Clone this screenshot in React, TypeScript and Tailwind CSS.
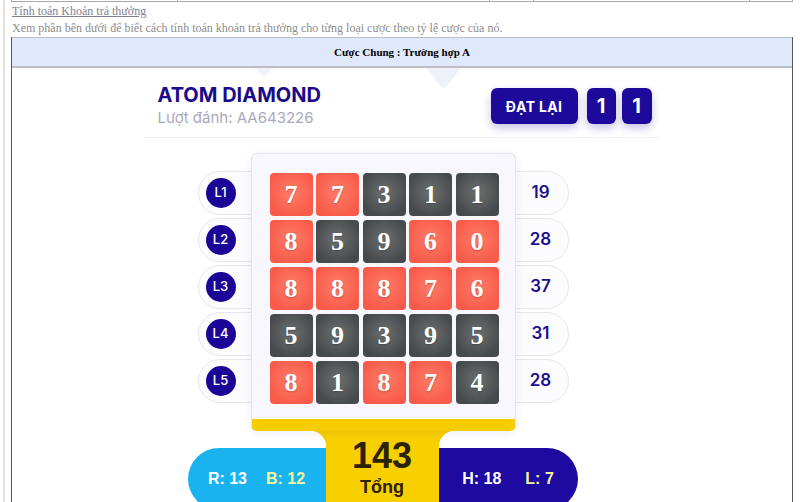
const digits = [
  [7, 7, 3, 1, 1],
  [8, 5, 9, 6, 0],
  [8, 8, 8, 7, 6],
  [5, 9, 3, 9, 5],
  [8, 1, 8, 7, 4],
];

// 1 = red cell, 0 = dark cell
const reds = [
  [1, 1, 0, 0, 0],
  [1, 0, 0, 1, 1],
  [1, 1, 1, 1, 1],
  [0, 0, 0, 0, 0],
  [1, 0, 1, 1, 0],
];

const lineTotals = digits.map((row) => row.reduce((a, b) => a + b, 0));
const total = lineTotals.reduce((a, b) => a + b, 0);

function Cell({ value, red }: { value: number; red: boolean }) {
  return (
    <div
      className={`flex h-[43px] w-[43px] items-center justify-center rounded-[4px] text-[26px] font-bold text-white [font-family:'Liberation_Serif',serif] [text-shadow:0_1px_2px_rgba(0,0,0,0.25)] ${
        red
          ? 'bg-[radial-gradient(circle_at_50%_45%,#ff7c69_0%,#f85b4a_75%)]'
          : 'bg-[radial-gradient(circle_at_50%_45%,#6c706e_0%,#464a4d_75%)]'
      }`}
    >
      {value}
    </div>
  );
}

function GameBoard() {
  return (
    <div className="relative mx-auto w-[517px] [font-family:Inter,'Liberation_Sans',sans-serif]">
      {/* pale decorative shapes peeking from the top */}
      <svg className="absolute left-[110px] top-0" width="20" height="9" viewBox="0 0 20 9">
        <path d="M0 0 H20 L11 8 Q10 9 9 8 Z" fill="#f2f3fb" />
      </svg>
      <svg className="absolute left-[282px] top-0" width="35" height="21" viewBox="0 0 35 21">
        <path d="M0 0 H35 L19.5 19.5 Q17.5 21.5 15.5 19.5 Z" fill="#eef0fa" />
      </svg>

      {/* header */}
      <div className="flex items-start justify-between border-b border-[#f0f0f6] pl-[14px] pr-[9px] pt-[15px] pb-[9px]">
        <div>
          <div className="text-[20px] font-bold leading-[24px] text-[#1b0b8a]">ATOM DIAMOND</div>
          <div className="mt-[1px] text-[15px] leading-[20px] text-[#a9a9bd]">Lượt đánh: AA643226</div>
        </div>
        <div className="mt-[5px] flex items-center">
          <div className="flex h-[36px] w-[87px] items-center justify-center rounded-[6px] bg-[#1d0a9b] text-[14px] font-bold tracking-wide text-white shadow-[0_4px_8px_rgba(29,10,155,0.25)]">
            ĐẠT LẠI
          </div>
          <div className="ml-[9px] flex h-[36px] w-[29px] items-center justify-center rounded-[6px] bg-[#1d0a9b] text-[20px] font-bold text-white shadow-[0_4px_8px_rgba(29,10,155,0.25)]">
            1
          </div>
          <div className="ml-[6px] flex h-[36px] w-[30px] items-center justify-center rounded-[6px] bg-[#1d0a9b] text-[20px] font-bold text-white shadow-[0_4px_8px_rgba(29,10,155,0.25)]">
            1
          </div>
        </div>
      </div>

      <div className="ml-[44px] mt-[15px]">
        {/* lines + grid */}
        <div className="ml-[10px] flex">
          <div className="z-0 -mr-[17px] flex w-[70px] flex-col gap-[3px] pt-[18px]">
            {lineTotals.map((_, i) => (
              <div
                key={i}
                className="flex h-[44px] items-center rounded-l-full border border-[#e6e6f0] bg-[#fcfcff] pl-[7px]"
              >
                <div className="flex h-[30px] w-[30px] items-center justify-center rounded-full bg-[#1a0597] text-[13px] font-medium text-white">
                  L{i + 1}
                </div>
              </div>
            ))}
          </div>

          <div className="z-10 w-[265px] rounded-[6px] border border-b-[12px] border-[#e4e3ee] border-b-[#f5cd00] bg-[#f8f7fd] pb-[15px] pl-[18px] pr-[16px] pt-[19px] shadow-[0_2px_10px_rgba(40,30,120,0.08)]">
            <div className="grid grid-cols-5 gap-x-[3.5px] gap-y-[4px]">
              {digits.map((row, r) =>
                row.map((v, c) => <Cell key={`${r}-${c}`} value={v} red={reds[r][c] === 1} />)
              )}
            </div>
          </div>

          <div className="z-0 -ml-[17px] flex w-[70px] flex-col gap-[3px] pt-[18px]">
            {lineTotals.map((t, i) => (
              <div
                key={i}
                className="flex h-[44px] items-center justify-center rounded-r-full border border-[#e6e6f0] bg-[#fcfcff] pl-[14px] text-[17px] font-semibold text-[#1c0f8f]"
              >
                {t}
              </div>
            ))}
          </div>
        </div>

        {/* totals */}
        <div className="flex items-start [font-family:'Liberation_Sans',Arial,sans-serif]">
          <div className="mt-[17px] flex h-[62px] w-[138px] items-center justify-center gap-[19px] rounded-l-full bg-[#19b3ef] text-[16px] font-bold">
            <span className="text-white">R: 13</span>
            <span className="text-[#f2f59c]">B: 12</span>
          </div>
          <div className="relative flex h-[80px] w-[113px] flex-col items-center bg-[#f8cf00] pt-[5px]">
            <div className="absolute -left-[16px] top-0 h-[16px] w-[16px] bg-[radial-gradient(circle_at_0_100%,transparent_16px,#f8cf00_16.5px)]" />
            <div className="absolute -right-[16px] top-0 h-[16px] w-[16px] bg-[radial-gradient(circle_at_100%_100%,transparent_16px,#f8cf00_16.5px)]" />
            <div className="text-[36px] font-bold leading-[40px] text-[#2a2200]">{total}</div>
            <div className="text-[18px] font-bold leading-[22px] text-[#2a2200]">Tổng</div>
          </div>
          <div className="mt-[17px] flex h-[62px] w-[139px] items-center justify-center gap-[24px] rounded-r-full bg-[#1e0aa0] text-[16px] font-bold">
            <span className="text-white">H: 18</span>
            <span className="text-[#f2f59c]">L: 7</span>
          </div>
        </div>
      </div>
    </div>
  );
}

export default function App() {
  return (
    <div className="h-[502px] w-[800px] overflow-hidden bg-white [font-family:'Liberation_Serif','Times_New_Roman',serif]">
      <div className="ml-[3px] h-full border-l-2 border-[#e4e4e4] pl-[6px] pr-[7px]">
        {/* bottom edge of the table above */}
        <div className="flex h-[2px] border-x border-b border-[#a9a9a9]">
          <div className="w-[166px] border-r border-[#a9a9a9]" />
          <div className="w-[312px] border-r border-[#a9a9a9]" />
          <div className="w-[44px] border-r border-[#a9a9a9]" />
          <div className="w-[216px] border-r border-[#a9a9a9]" />
          <div className="flex-1" />
        </div>

        <div className="pl-[1px]">
          <a className="block text-[12px] leading-[18px] text-[#7f8192] underline">Tính toán Khoản trả thưởng</a>
          <p className="text-[12px] leading-[17px] text-[#8c8c8c]">
            Xem phần bên dưới để biết cách tính toán khoản trả thưởng cho từng loại cược theo tỷ lệ cược của nó.
          </p>
        </div>

        <div className="h-[470px] border-x border-[#555]">
          <div className="flex h-[31px] items-center justify-center border-t border-b-2 border-[#bdbdc4] bg-[#dfe9fb] text-[11px] font-bold text-black">
            Cược Chung : Trường hợp A
          </div>
          <GameBoard />
        </div>
      </div>
    </div>
  );
}
